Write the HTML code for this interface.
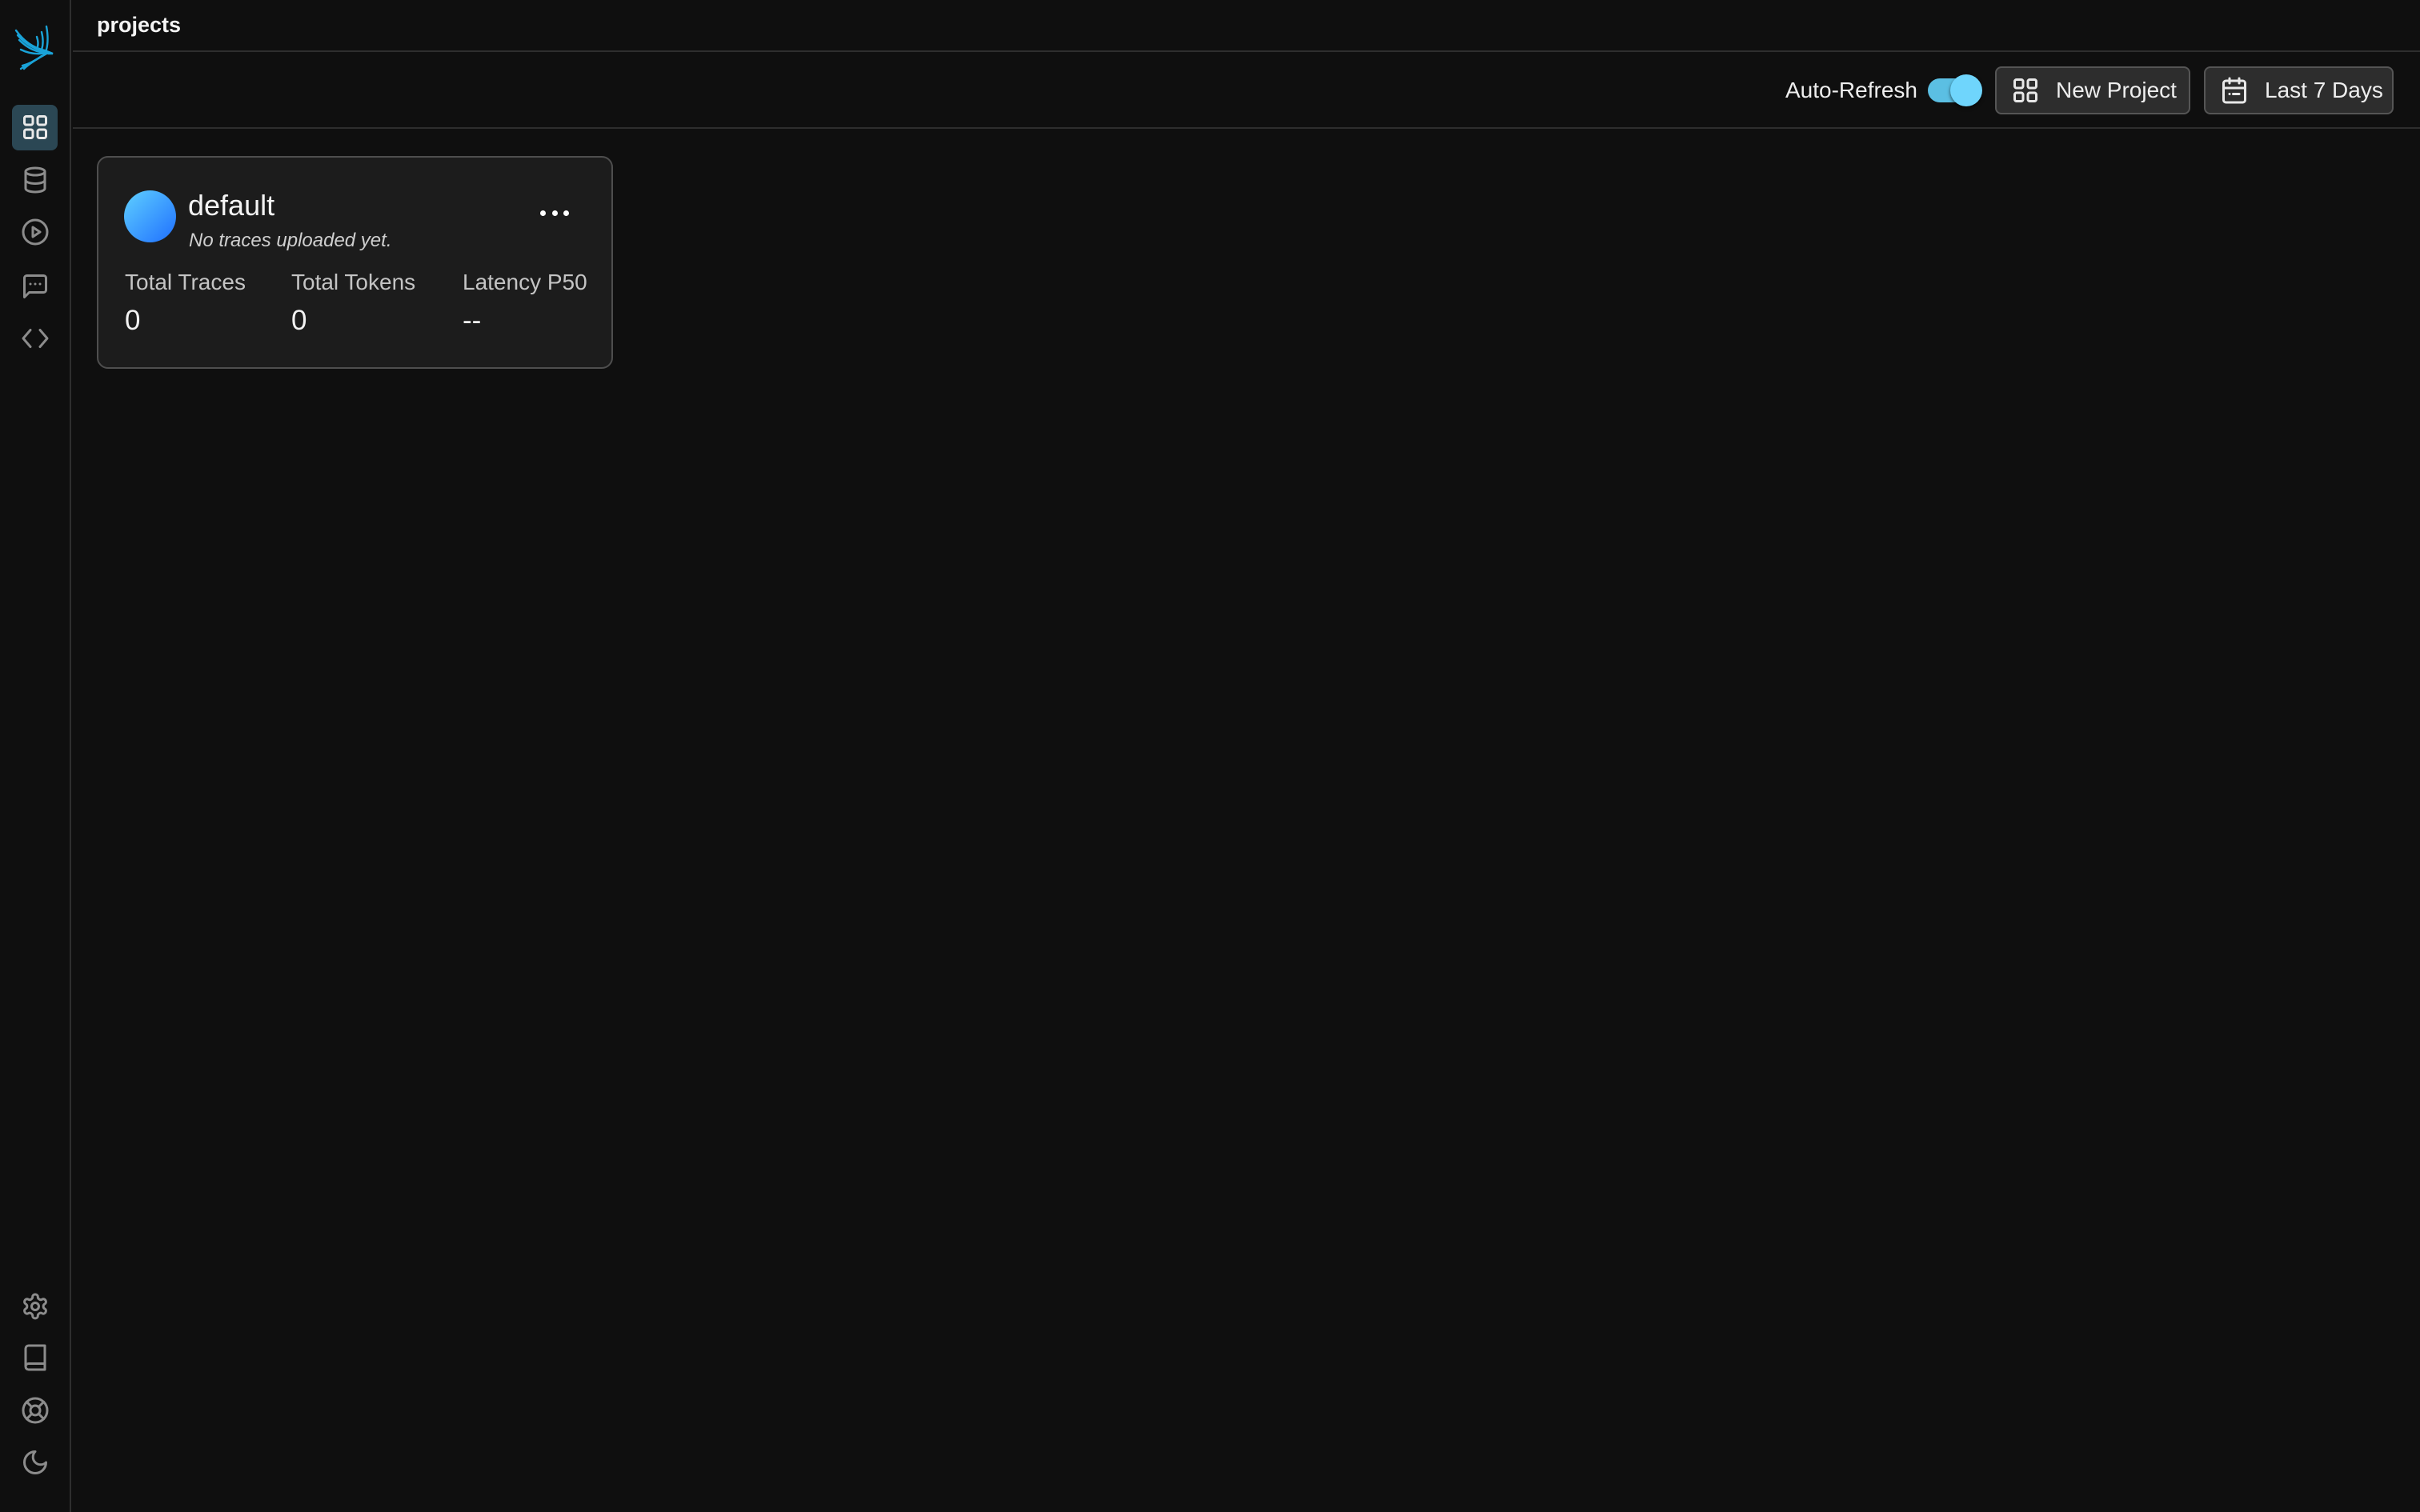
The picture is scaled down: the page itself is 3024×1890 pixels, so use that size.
<!DOCTYPE html>
<html><head><meta charset="utf-8"><style>
*{margin:0;padding:0;box-sizing:border-box}
html,body{width:3024px;height:1890px;background:#0f0f0f;overflow:hidden;font-family:"Liberation Sans",sans-serif;color:#f2f2f2}
.sb{position:absolute;left:0;top:0;width:89px;height:1890px;border-right:2px solid #2e2e2e;background:#0f0f0f}
.ic{position:absolute;left:26px;width:36px;height:36px}
.ic svg{width:36px;height:36px;fill:none;stroke:#8c8c8c;stroke-width:2;stroke-linecap:round;stroke-linejoin:round}
.act{position:absolute;left:15px;top:131px;width:57px;height:57px;background:#2b4754;border-radius:8px}
.hdr{position:absolute;left:91px;top:0;right:0;height:65px;border-bottom:2px solid #2e2e2e}
.title{position:absolute;left:121px;top:16px;font-size:27px;font-weight:bold;color:#f4f4f4}
.bar{position:absolute;left:91px;top:65px;right:0;height:96px;border-bottom:2px solid #2e2e2e}
.btn{position:absolute;top:83px;height:60px;background:#2d2d2d;border:2px solid #555;border-radius:8px;font-size:28px;color:#eee;display:flex;align-items:center}
.btn svg{width:36px;height:36px;fill:none;stroke:#e8e8e8;stroke-width:2;stroke-linecap:round;stroke-linejoin:round;margin-left:18px;margin-right:20px}
.card{position:absolute;left:121px;top:195px;width:645px;height:266px;background:#1c1c1c;border:2px solid #4e4e4e;border-radius:14px}
.lab{position:absolute;top:337px;font-size:28px;color:#c4c4c4}
.val{position:absolute;top:381px;font-size:35px;color:#f2f2f2}
</style></head><body>
<div class="sb">
<svg style="position:absolute;left:16px;top:30px" width="56" height="60" viewBox="0 0 56 60" fill="none" stroke="#1aa3d8" stroke-width="2.4" stroke-linecap="round">
<path d="M4 8 C14 22 26 30 40 33"/><path d="M6 14 C16 26 28 32 42 35"/><path d="M8 20 C18 30 30 36 44 36"/><path d="M42 3 C44 14 44 24 42 32"/><path d="M36 10 C38 18 38 26 36 32"/><path d="M30 16 C32 22 32 27 30 31"/><path d="M40 33 L50 37 L44 37"/><path d="M10 32 C22 38 34 38 44 36"/><path d="M44 36 C34 42 22 48 10 56"/><path d="M40 38 C30 44 20 50 14 56"/><path d="M36 40 C28 46 20 50 12 52"/>
</svg>
<div class="act"></div>
<div class="ic" style="top:141px"><svg viewBox="0 0 24 24" style="stroke:#e8e8e8"><rect x="3" y="3" width="7" height="7" rx="1.5"/><rect x="14" y="3" width="7" height="7" rx="1.5"/><rect x="3" y="14" width="7" height="7" rx="1.5"/><rect x="14" y="14" width="7" height="7" rx="1.5"/></svg></div>
<div class="ic" style="top:207px"><svg viewBox="0 0 24 24"><ellipse cx="12" cy="5" rx="8" ry="3"/><path d="M4 5v14c0 1.7 3.6 3 8 3s8-1.3 8-3V5"/><path d="M4 12c0 1.7 3.6 3 8 3s8-1.3 8-3"/></svg></div>
<div class="ic" style="top:272px"><svg viewBox="0 0 24 24"><circle cx="12" cy="12" r="10"/><path d="M10 8l6 4-6 4z"/></svg></div>
<div class="ic" style="top:340px"><svg viewBox="0 0 24 24"><path d="M21 15a2 2 0 0 1-2 2H7l-4 4V5a2 2 0 0 1 2-2h14a2 2 0 0 1 2 2z"/><path d="M8 10h.01M12 10h.01M16 10h.01"/></svg></div>
<div class="ic" style="top:405px"><svg viewBox="0 0 24 24"><path d="M8 5l-6 7 6 7M16 5l6 7-6 7"/></svg></div>
<div class="ic" style="top:1615px"><svg viewBox="0 0 24 24"><path d="M12.2 2h-.4a2 2 0 0 0-2 2v.2a2 2 0 0 1-1 1.7l-.4.3a2 2 0 0 1-2 0l-.2-.1a2 2 0 0 0-2.7.7l-.2.4a2 2 0 0 0 .7 2.7l.2.1a2 2 0 0 1 1 1.7v.5a2 2 0 0 1-1 1.7l-.2.1a2 2 0 0 0-.7 2.7l.2.4a2 2 0 0 0 2.7.7l.2-.1a2 2 0 0 1 2 0l.4.3a2 2 0 0 1 1 1.7v.2a2 2 0 0 0 2 2h.4a2 2 0 0 0 2-2v-.2a2 2 0 0 1 1-1.7l.4-.3a2 2 0 0 1 2 0l.2.1a2 2 0 0 0 2.7-.7l.2-.4a2 2 0 0 0-.7-2.7l-.2-.1a2 2 0 0 1-1-1.7v-.5a2 2 0 0 1 1-1.7l.2-.1a2 2 0 0 0 .7-2.7l-.2-.4a2 2 0 0 0-2.7-.7l-.2.1a2 2 0 0 1-2 0l-.4-.3a2 2 0 0 1-1-1.7V4a2 2 0 0 0-2-2z"/><circle cx="12" cy="12" r="3"/></svg></div>
<div class="ic" style="top:1679px"><svg viewBox="0 0 24 24"><path d="M4 19.5v-15A2.5 2.5 0 0 1 6.5 2H20v20H6.5a2.5 2.5 0 0 1 0-5H20"/></svg></div>
<div class="ic" style="top:1745px"><svg viewBox="0 0 24 24"><circle cx="12" cy="12" r="10"/><circle cx="12" cy="12" r="4"/><path d="M4.9 4.9l4.3 4.3M14.8 14.8l4.3 4.3M14.8 9.2l4.3-4.3M4.9 19.1l4.3-4.3"/></svg></div>
<div class="ic" style="top:1810px"><svg viewBox="0 0 24 24"><path d="M12 3a6 6 0 0 0 9 9 9 9 0 1 1-9-9z"/></svg></div>
</div>
<div class="hdr"></div>
<div class="title">projects</div>
<div class="bar"></div>
<div style="position:absolute;left:2231px;top:97px;font-size:28px;color:#eee">Auto-Refresh</div>
<div style="position:absolute;left:2409px;top:98px;width:64px;height:30px;border-radius:15px;background:#5bbfe3"></div>
<div style="position:absolute;left:2437px;top:93px;width:40px;height:40px;border-radius:50%;background:#6fd5fc;box-shadow:0 2px 4px rgba(0,0,0,.6)"></div>
<div class="btn" style="left:2493px;width:244px"><svg viewBox="0 0 24 24"><rect x="3" y="3" width="7" height="7" rx="1.5"/><rect x="14" y="3" width="7" height="7" rx="1.5"/><rect x="3" y="14" width="7" height="7" rx="1.5"/><rect x="14" y="14" width="7" height="7" rx="1.5"/></svg>New Project</div>
<div class="btn" style="left:2754px;width:237px"><svg viewBox="0 0 24 24"><rect x="3" y="4" width="18" height="18" rx="2"/><path d="M8 2v4M16 2v4M3 10h18M8 15h.01M11 15h5"/></svg>Last 7 Days</div>
<div class="card"></div>
<div style="position:absolute;left:155px;top:238px;width:65px;height:65px;border-radius:50%;background:linear-gradient(135deg,#5fd0ff,#1f6fff)"></div>
<div style="position:absolute;left:235px;top:236px;font-size:36px;color:#f4f4f4">default</div>
<div style="position:absolute;left:236px;top:287px;font-size:24px;font-style:italic;color:#cfcfcf">No traces uploaded yet.</div>
<div style="position:absolute;left:675px;top:263px;width:36px;height:10px;display:flex;justify-content:space-between"><i style="width:7px;height:7px;border-radius:50%;background:#fff"></i><i style="width:7px;height:7px;border-radius:50%;background:#fff"></i><i style="width:7px;height:7px;border-radius:50%;background:#fff"></i></div>
<div class="lab" style="left:156px">Total Traces</div>
<div class="lab" style="left:364px">Total Tokens</div>
<div class="lab" style="left:578px">Latency P50</div>
<div class="val" style="left:156px">0</div>
<div class="val" style="left:364px">0</div>
<div class="val" style="left:578px">--</div>
</body></html>
